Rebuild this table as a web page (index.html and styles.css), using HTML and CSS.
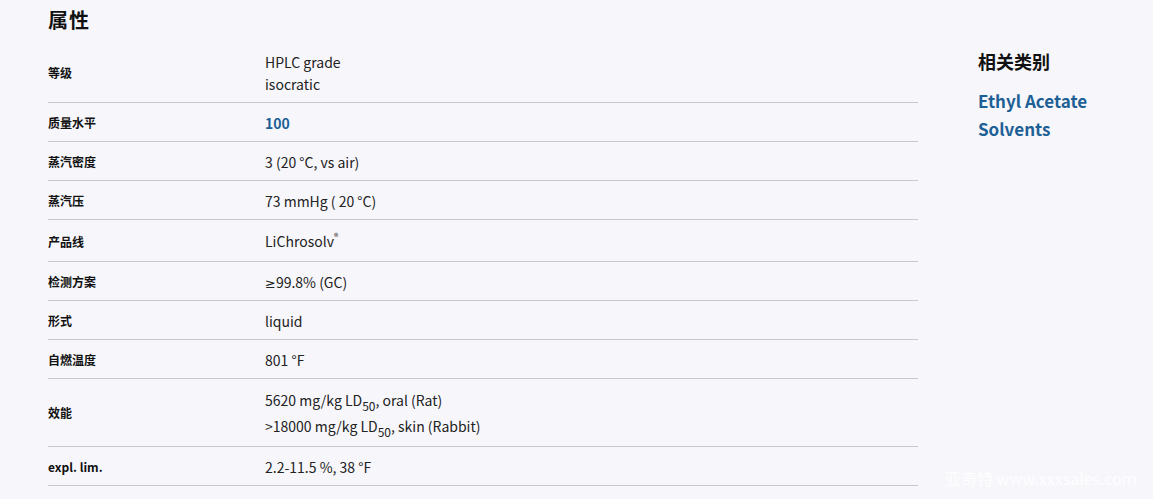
FILE: index.html
```html
<!DOCTYPE html>
<html lang="zh">
<head>
<meta charset="utf-8">
<title>属性</title>
<link rel="stylesheet" href="styles.css">
</head>
<body>
<div class="page">
  <section class="props">
    <h2 class="title">属性</h2>
    <div class="table">
      <div class="row">
        <div class="label">等级</div>
        <div class="value"><div>HPLC grade</div><div>isocratic</div></div>
      </div>
      <div class="row">
        <div class="label">质量水平</div>
        <div class="value"><a class="link-num" href="#">100</a></div>
      </div>
      <div class="row">
        <div class="label">蒸汽密度</div>
        <div class="value">3 (20 °C, vs air)</div>
      </div>
      <div class="row">
        <div class="label">蒸汽压</div>
        <div class="value">73 mmHg ( 20 °C)</div>
      </div>
      <div class="row row-sup">
        <div class="label">产品线</div>
        <div class="value">LiChrosolv<sup>®</sup></div>
      </div>
      <div class="row">
        <div class="label">检测方案</div>
        <div class="value"><span class="sym">≥</span>99.8% (GC)</div>
      </div>
      <div class="row">
        <div class="label">形式</div>
        <div class="value">liquid</div>
      </div>
      <div class="row">
        <div class="label">自燃温度</div>
        <div class="value">801 °F</div>
      </div>
      <div class="row row-sub">
        <div class="label">效能</div>
        <div class="value"><div>5620 mg/kg LD<sub>50</sub>, oral (Rat)</div><div>&gt;18000 mg/kg LD<sub>50</sub>, skin (Rabbit)</div></div>
      </div>
      <div class="row">
        <div class="label">expl. lim.</div>
        <div class="value">2.2-11.5 %, 38 °F</div>
      </div>
    </div>
  </section>
  <aside class="related">
    <h3 class="rel-title">相关类别</h3>
    <a class="rel-link" href="#">Ethyl Acetate</a>
    <a class="rel-link" href="#">Solvents</a>
  </aside>
</div>
<div class="watermark">亚奇特 www.xxxsales.com</div>
</body>
</html>
```
FILE: styles.css
```css
html, body {
  margin: 0;
  padding: 0;
}
body {
  background: #f7f7fb;
  font-family: "Noto Sans CJK SC", "Noto Sans", sans-serif;
  color: #222;
  width: 1153px;
  height: 499px;
  overflow: hidden;
  position: relative;
}
.page {
  display: flex;
  padding-left: 48px;
}
.props {
  width: 870px;
}
.title {
  margin: 6px 0 0;
  font-size: 20px;
  line-height: 28px;
  font-weight: 700;
  color: #111;
  letter-spacing: 1px;
}
.table {
  margin-top: 8px;
}
.row {
  display: grid;
  grid-template-columns: 217px 1fr;
  align-items: center;
  border-bottom: 1px solid #c9c9cd;
  padding: 9px 0 7px;
}
.label {
  font-size: 12px;
  font-weight: 700;
  color: #111;
  line-height: 22px;
}
.value {
  font-size: 14px;
  line-height: 22px;
  color: #222;
}
.sym {
  font-family: "DejaVu Sans", sans-serif;
  font-size: 13px;
  line-height: 0;
}
.link-num {
  color: #1d6096;
  font-weight: 700;
  text-decoration: none;
}
.row-sup .value {
  line-height: 25px;
}
sup {
  font-size: 9px;
  line-height: 0;
  vertical-align: 7px;
}
.row-sub {
  padding: 8px 0 7px;
}
.row-sub .value div {
  line-height: 26px;
}
sub {
  font-size: 12px;
  line-height: 0;
  vertical-align: -5px;
}
.related {
  margin-left: 60px;
  padding-top: 47px;
  display: flex;
  flex-direction: column;
}
.rel-title {
  margin: 0 0 12px;
  font-size: 18px;
  line-height: 28px;
  font-weight: 700;
  color: #111;
}
.rel-link {
  font-size: 17px;
  line-height: 28px;
  font-weight: 700;
  color: #1d6096;
  text-decoration: none;
}
.watermark {
  position: absolute;
  left: 945px;
  top: 466px;
  font-size: 16px;
  color: rgba(255, 255, 255, 0.8);
  white-space: nowrap;
}
```
